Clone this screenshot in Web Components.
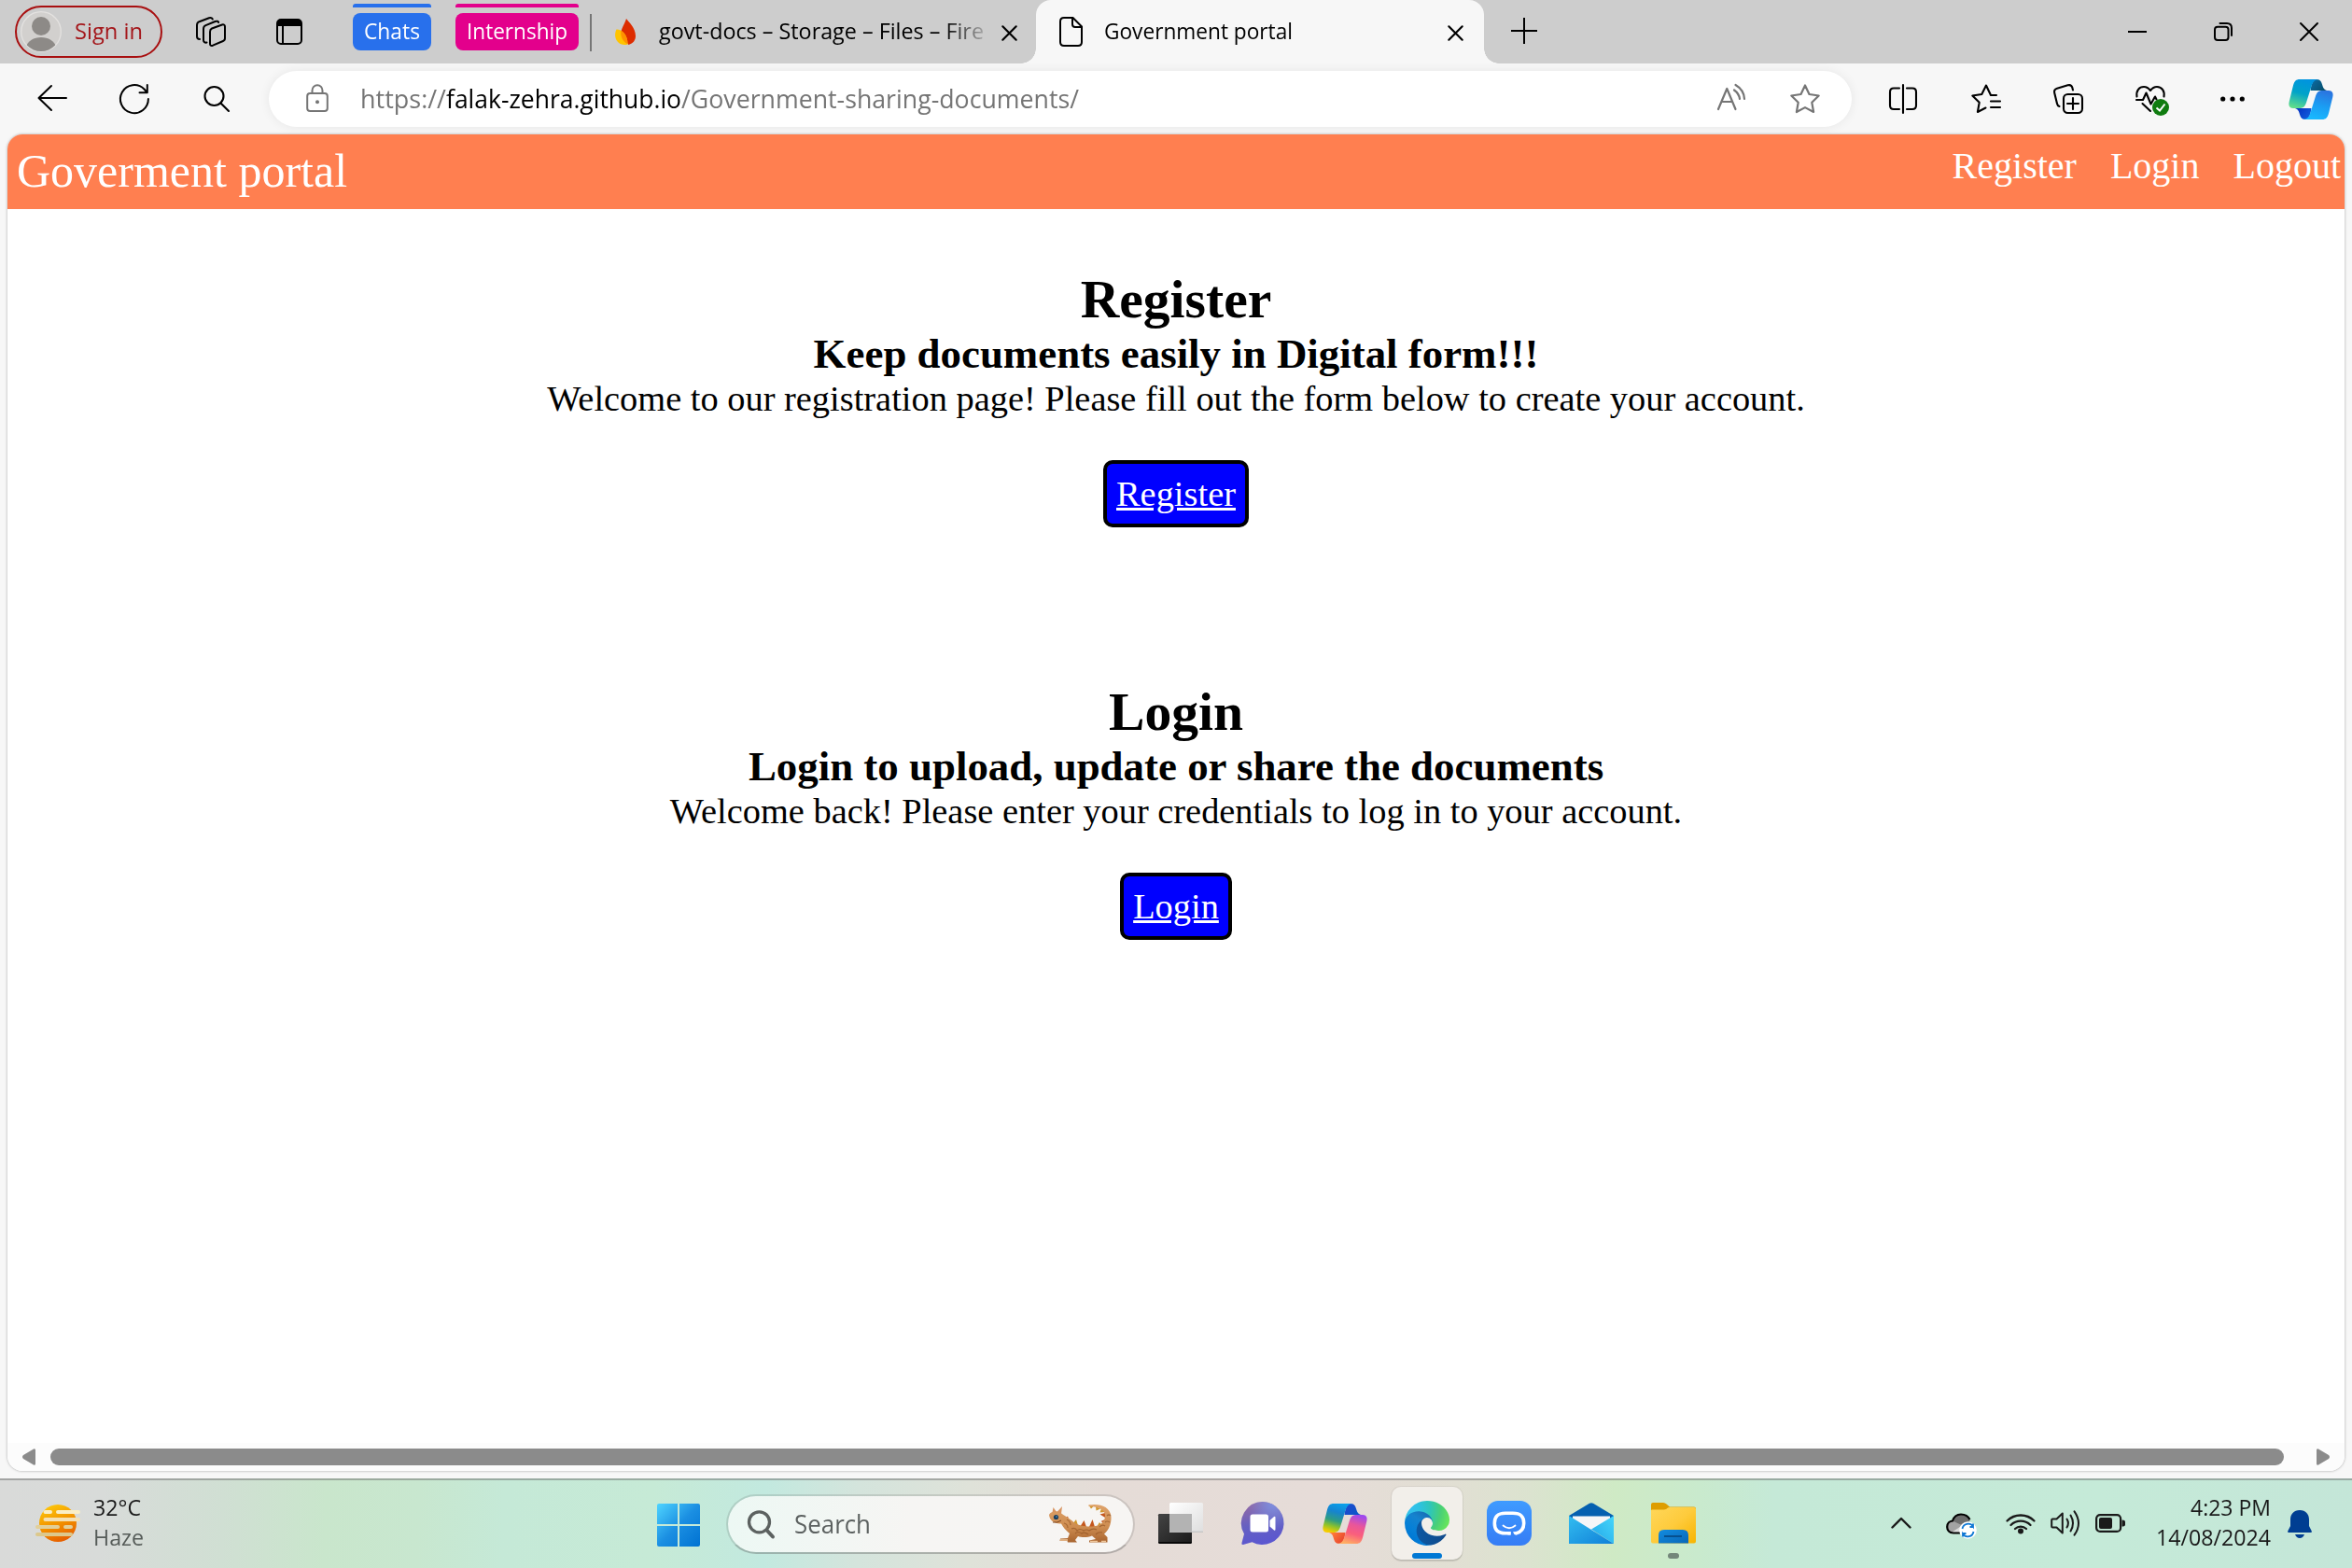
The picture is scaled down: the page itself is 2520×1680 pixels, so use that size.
<!DOCTYPE html>
<html lang="en">
<head>
<meta charset="utf-8">
<title>Government portal</title>
<style>
html,body{margin:0;padding:0}
body{width:2520px;height:1680px;overflow:hidden;background:#f7f7f7;font-family:"Open Sans","Noto Sans",sans-serif;display:flex;flex-direction:column}
</style>
</head>
<body>
<tab-strip></tab-strip>
<address-bar></address-bar>
<page-frame>
  <portal-nav brand="Goverment portal"></portal-nav>
  <portal-section heading="Register" action="Register">
    <span slot="sub">Keep documents easily in Digital form!!!</span>
    <span>Welcome to our registration page! Please fill out the form below to create your account.</span>
  </portal-section>
  <portal-section heading="Login" action="Login">
    <span slot="sub">Login to upload, update or share the documents</span>
    <span>Welcome back! Please enter your credentials to log in to your account.</span>
  </portal-section>
</page-frame>
<task-bar></task-bar>

<script>
const S = (w, d, extra = '') => `<g fill="none" stroke="currentColor" stroke-width="${w}" stroke-linecap="round" stroke-linejoin="round" ${extra}>${d}</g>`;
const ribbonL = 'M12 0H33C27 0 25.500 4 24 9L19 25C17.500 29.500 15.500 31 11 31H5C1 31-.3 28 .7 24L5 6.500C6.300 2 8 0 12 0Z';
const flapT = 'M23.500 12C24.500 5 26 0 30 0C34.500 0 35.300 3 36.500 7Q37.500 11 41 12Z';
const copilot = (id, a, b, c, d) => `<defs>
<linearGradient id="${id}a" x1=".6" y1="0" x2=".3" y2="1">${a}</linearGradient><linearGradient id="${id}b" x1="0" y1="0" x2="1" y2=".6">${b}</linearGradient>
<linearGradient id="${id}c" x1=".6" y1="0" x2=".3" y2="1">${c}</linearGradient><linearGradient id="${id}d" x1="0" y1="0" x2="1" y2=".6">${d}</linearGradient></defs>
<path d="${flapT}" fill="url(#${id}b)"/><path d="${ribbonL}" fill="url(#${id}a)"/>
<g transform="rotate(180 24 21.500)"><path d="${flapT}" fill="url(#${id}d)"/><path d="${ribbonL}" fill="url(#${id}c)"/></g>`;
const st = (...p) => p.map(([o, c]) => `<stop offset="${o}" stop-color="${c}"/>`).join('');

const ICONS = {
  avatar: [44, 44, `<defs><clipPath id="c"><circle cx="22" cy="22" r="21"/></clipPath></defs><circle cx="22" cy="22" r="21.300" fill="#d2d0ce" stroke="#e4e2e0" stroke-width="1.300"/><g clip-path="url(#c)" fill="#8d8a87"><circle cx="22" cy="16" r="10"/><path d="M5.500 39C8 31.500 14 28 22 28S36 31.500 38.500 39C34 43 28 44.500 22 44.500S10 43 5.500 39Z"/></g>`],
  workspaces: [32, 32, S(2, '<path d="M17 12.500 28 8.500C30 8 31 9 31 10.500V23C31 24.500 30.500 25.500 29 26L18 30.700C16 31.500 15 30.500 15 29V16C15 14.200 15.500 13.200 17 12.500Z"/><path d="M11.500 27.500C9.500 28 8 27 8 25V13C8 11 8.600 10 10.500 9.200L20.500 5C22.500 4.300 24 4.800 24.200 6"/><path d="M4 24C2 24 1 23 1 21V9C1 7 1.600 6 3.500 5.200L14 1.200C15.800.7 17.200 1.300 17.800 2.500"/>')],
  tabpane: [28, 28, S(2, '<rect x="1" y="1" width="26" height="26" rx="4"/><path d="M7 8V27"/>') + '<path d="M1 8V5a4 4 0 0 1 4-4h18a4 4 0 0 1 4 4v3Z" fill="#000"/>'],
  flame: [22, 28, `<path d="M12 0C14 3 22 9.500 22 18.500C22 23 19.500 26.500 14.500 28L6 17C6.500 10 10.500 5.500 12 0Z" fill="#dd2c00"/><path d="M1.500 11.500C5 11 13.500 15 13.500 27.500C9.500 29 5.500 27.500 3 25C-.5 21.500-.6 15.500 1.500 11.500Z" fill="#ffc400"/><path d="M6.300 12.800C10.500 15.500 13.500 20 13.500 27.500C7 23.500 5.800 18.500 6.300 12.800Z" fill="#ff9100"/>`],
  doc: [25, 32, S(2, '<path d="M5 1H14.500L24 10.500V27Q24 31 20 31H5Q1 31 1 27V5Q1 1 5 1Z"/><path d="M14 1.500V8Q14 11 17 11H23.500"/>')],
  close: [17, 17, S(2.200, '<path d="M1.300 1.300 15.700 15.700M15.700 1.300 1.300 15.700"/>')],
  plus: [28, 28, '<path d="M14 0V28M0 14H28" stroke="#000" stroke-width="2"/>'],
  min: [20, 20, '<path d="M0 10H20" stroke="#000" stroke-width="2"/>'],
  restore: [20, 20, S(2, '<rect x="1" y="4.800" width="14.500" height="14.200" rx="3"/><path d="M6.500 1H14Q19 1 19 6V14"/>')],
  winclose: [20, 20, S(2, '<path d="M1 1 19 19M19 1 1 19"/>')],
  back: [32, 28, S(2, '<path d="M31 14H1.500M15 1 1.500 14 15 27"/>')],
  refresh: [32, 32, S(2, '<path d="M30.900 16A15 15 0 1 1 26.500 5.500L29.500 9M29.800 1V9.300H21.500"/>')],
  find: [28, 28, S(2.100, '<circle cx="11.500" cy="11" r="10"/><path d="M18.500 18.500 27 27"/>')],
  lock: [24, 30, S(2, '<rect x="1.200" y="10" width="21.600" height="19" rx="3"/><path d="M6.500 10V7A5.500 5.800 0 0 1 17.500 7V10"/>') + '<circle cx="12" cy="19.300" r="2" fill="currentColor"/>'],
  read: [30, 29, S(2.200, '<path d="M1 27 10.300 5 19.500 27M4.500 19H16"/><path d="M18 6.500C21.500 9 23.500 12 24 16"/><path d="M19.500 1C25.500 4.500 28.700 9.500 29 16"/>')],
  star: [32, 32, S(2.200, '<path d="M16 1.500 20.500 11 30.700 12.500 23.300 19.700 25.100 30 16 25.100 6.900 30 8.700 19.700 1.300 12.500 11.500 11Z"/>')],
  split: [30, 32, S(2.100, '<path d="M11 4.500H5Q1 4.500 1 8.500V23Q1 27 5 27H11M19 4.500H25Q29 4.500 29 8.500V23Q29 27 25 27H19M15 1V31"/>')],
  favs: [32, 32, S(2.100, '<path d="M27 12H21L16 1.500 11.300 11 1.300 12.500 8.700 19.700 6.900 30 15.500 25.500M21 18.500H31M21 25H31"/>')],
  coll: [32, 32, S(2.100, '<rect x="11" y="11" width="20" height="20" rx="4.500"/><path d="M21 15V27M15 21H27"/><path d="M6.500 24C5 23.500 4.300 22.500 4 21L1.200 9.500C.6 7 1.500 5.500 4 4.700L15.500 1.300C18 .6 19.600 1.400 20.300 3.800L21 6.500"/>')],
  health: [36, 32, S(2.100, '<path d="M1.500 11.500C.5 5 4 1 9 1Q13 1 16 5Q19 1 23 1C28.500 1 31.500 6 30.500 11.500"/><path d="M1 15H8L11.500 7.500 16.500 19.500 21 11.500 22.500 14.500M7.500 19 16 27"/>') + '<circle cx="27" cy="23" r="9" fill="#107c10"/><path d="M22.500 23.500 26 26.500 31.500 19.500" fill="none" stroke="#fff" stroke-width="2"/>'],
  dots: [26, 6, '<circle cx="2.700" cy="3" r="2.600"/><circle cx="13" cy="3" r="2.600"/><circle cx="23.300" cy="3" r="2.600"/>'],
  copilotBlue: [48, 43, copilot('p', st([0, '#0093e0'], [.5, '#00a3c8'], [1, '#5fdc8c']), st([0, '#0d6ea8'], [1, '#06506e']), st([0, '#19b9ff'], [.5, '#1b9cf2'], [1, '#2b74df']), st([0, '#1265e0'], [1, '#0735c4']))],
  copilot: [48, 43, copilot('q', st([0, '#0aa0ea'], [.3, '#1684d0'], [.6, '#2f9d82'], [.8, '#8fc32a'], [1, '#f6cc00']), st([0, '#2447cf'], [1, '#0a56c9']), st([0, '#ffad62'], [.35, '#fa5f7c'], [.65, '#e9569a'], [1, '#9d49ef']), st([0, '#e23b2c'], [1, '#ff7a3a']))],
  haze: [48, 40, `<defs><linearGradient id="h" x1=".3" y1="0" x2=".7" y2="1">${st([0, '#fdc60a'], [.5, '#f29200'], [1, '#e55a00'])}</linearGradient></defs><circle cx="24" cy="20" r="20" fill="url(#h)"/><g stroke-width="4" stroke-linecap="round"><path d="M10.500 8H16M24 8H46" stroke="#faeec6"/><path d="M10.500 16H46" stroke="#f4e0b4"/><path d="M2 24H24M32 24H38" stroke="#e2cf98"/><path d="M2 32H38" stroke="#dcc88c"/></g>`],
  start: [46, 46, `<defs><linearGradient id="w" x1="0" y1="0" x2="46" y2="46" gradientUnits="userSpaceOnUse">${st([0, '#4fd4ff'], [.5, '#1b8fe2'], [1, '#0072d2'])}</linearGradient></defs><path fill="url(#w)" d="M2 0H22V22H0V2Q0 0 2 0ZM24 0H44Q46 0 46 2V22H24ZM0 24H22V46H2Q0 46 0 44ZM24 24H46V44Q46 46 44 46H24Z"/>`],
  searchBold: [29, 31, S(3.300, '<circle cx="12.500" cy="12.800" r="11"/><path d="M20.500 21.500 27 28.500" stroke-width="4"/>')],
  lizard: [68, 42, `<defs><linearGradient id="l" x1="0" y1="0" x2="0" y2="1">${st([0, '#dfa36b'], [.6, '#cd8c50'], [1, '#a8642f'])}</linearGradient></defs>
<path d="M16 16 20 12.500 22 19ZM33 24 37.500 17 40 24ZM43 24 46.500 16 49 24ZM60 9 54.500 10.500 61 14.500ZM61 15.500 55.500 18 60 20.500Z" fill="#c4571d"/><path d="M42.500 .5 45 4.500 48 1.500ZM50 2 50.500 6.500 55 4.500ZM56 4.500 54.500 8.500 60 8ZM25 21 29 16 31.500 24ZM51 24 54 19 58 24Z" fill="#cf952c"/>
<path d="M42.500 .5C54-1.500 65.500 2 66.500 13C67 22 62.500 29 59 31.500L62.500 35 62.500 40.500 43 40.500 43 38.500 50 37 46 33.500C41 35.500 35 35.500 31 34L28 38 30 40.500 20 40.500 19.500 39 11.500 39 12 36.500 20 36 22 31C18 28 15 24 13 20.500C6 21 .5 17 0 11C2 7 8 6.500 12 8.500C16 12 21 14 27 19.500C34 24 48 25 54.500 21.500C62 17 62 7 54 4C50 2.500 47 2 42.500 2Z" fill="url(#l)"/>
<path d="M3.500 8.500 4.500 3 8 8ZM8.500 8 14 2 13 10Z" fill="#d89460"/><circle cx="7.500" cy="13.500" r="2.600" fill="#193d5e"/><circle cx="8" cy="13" r=".8" fill="#62a8d8"/>
<path d="M4 19Q9 20 13 17" stroke="#7a4420" fill="none"/>
<path d="M16 20Q20 21 20 25M19 16Q23 18 23 22M24 26Q28 24 30 28Q33 25 37 28Q40 26 43 28Q47 25 51 27M28 31Q31 28 35 31Q38 29 42 32M54 24Q57 21 60 23M60 19Q62 17 65 19M62 12Q64 10 66 12M50 32Q53 29 57 30" fill="none" stroke="#8c4f20" stroke-width="1.200" opacity=".6"/><path d="M12 38H20M44 39.500H52M56 39.500H61" stroke="#f0c69a" stroke-width="1.500" fill="none"/>`],
  taskview: [48, 44, `<defs><linearGradient id="t" x1="0" y1="0" x2="1" y2="1">${st([0, '#444'], [1, '#1c1c1c'])}</linearGradient><linearGradient id="u" x1="0" y1="0" x2="1" y2="1">${st([0, '#fff'], [1, '#dedede'])}</linearGradient></defs><rect y="12" width="36" height="32" rx="1.500" fill="#080808"/><path d="M1.500 12H36V42H0V13.500Z" fill="url(#t)"/><rect x="12" width="36" height="32" rx="1.500" fill="url(#u)"/><path d="M12 12H36V32H12Z" fill="#b3b3b3"/><path d="M12 31.200H48" stroke="#bbb"/>`],
  chat: [46, 46, `<defs><linearGradient id="m" x1=".2" y1=".1" x2=".4" y2="1">${st([0, '#8d68a8'], [.5, '#6560c2'], [1, '#5b57d0'])}</linearGradient><radialGradient id="n" cx=".75" cy=".05" r=".6"><stop offset="0" stop-color="#7d8fe0"/><stop offset="1" stop-color="#7d8fe0" stop-opacity="0"/></radialGradient></defs><path d="M23 0A23 23 0 1 1 11.500 43.200L2 46Q-.2 46.300 .5 44L3 34.500A23 23 0 0 1 23 0Z" fill="url(#m)"/><path d="M23 0A23 23 0 1 1 11.500 43.200L2 46L3 34.500A23 23 0 0 1 23 0Z" fill="url(#n)"/><path d="M9.500 16Q9.500 13.500 12 13.500H26.500Q29 13.500 29 16V30Q29 32.500 26.500 32.500H12Q9.500 32.500 9.500 30ZM30.500 20 35 16Q36.500 15.200 36.500 17V29.500Q36.500 31.200 35 30.500L30.500 26.500Z" fill="#fff"/>`],
  edge: [48, 48, `<defs><linearGradient id="e1" x1="58" y1="177" x2="237" y2="177" gradientUnits="userSpaceOnUse">${st([0, '#0c59a4'], [1, '#114a8b'])}</linearGradient><linearGradient id="e2" x1="150" y1="80" x2="45" y2="225" gradientUnits="userSpaceOnUse">${st([0, '#176cb4'], [.35, '#1583cf'], [.7, '#0680d7'], [1, '#0078d4'])}</linearGradient><radialGradient id="e3" cx="30" cy="45" r="235" gradientUnits="userSpaceOnUse">${st([0, '#35c1f1'], [.25, '#2ec2df'], [.5, '#2fc6b8'], [.75, '#48cf78'], [1, '#69e65a'])}</radialGradient></defs><g transform="scale(.1875)"><path fill="url(#e1)" d="M231 190.500c-3.400 1.800-6.900 3.400-10.500 4.700a101.500 101.500 0 01-35.900 6.400c-47.300 0-88.500-32.500-88.500-74.300a31.500 31.500 0 0116.400-27.300c-42.800 1.800-53.800 46.400-53.800 72.500 0 74 68.100 81.400 82.800 81.400 7.900 0 19.800-2.300 27-4.600l1.300-.4a128.300 128.300 0 0066.600-52.800 4 4 0 00-5.400-5.600z"/><path fill="url(#e2)" d="M105.700 241.400a79.200 79.200 0 01-22.700-21.300 80.700 80.700 0 0129.500-120c3.200-1.500 8.500-4.100 15.600-4a32.400 32.400 0 0125.700 13 31.900 31.900 0 016.300 18.700c0-.2 24.500-79.600-80-79.600-43.900 0-80 41.600-80 78.200a130.200 130.200 0 0012.100 56 128 128 0 00156.400 67 75.500 75.500 0 01-62.800-8z"/><path fill="url(#e3)" d="M152.300 148.900c-.9 1-3.400 2.500-3.400 5.600 0 2.600 1.700 5.200 4.800 7.300 14.400 10 41.500 8.700 41.600 8.700a59.600 59.600 0 0030.300-8.300 61.400 61.400 0 0030.400-52.900c.3-22.400-8-37.300-11.300-43.900C223.500 23.900 177.700 0 128 0A128 128 0 000 126.200c.5-36.500 36.800-66 80-66 3.500 0 23.500.3 42 10.100 16.300 8.600 24.900 18.900 30.800 29.200 6.200 10.700 7.300 24.100 7.300 29.500s-2.700 13.300-7.800 19.900z"/></g>`],
  bubble: [48, 48, `<defs><linearGradient id="z" x1="0" y1="0" x2="0" y2="1">${st([0, '#3f9bff'], [1, '#357cf5'])}</linearGradient></defs><rect width="48" height="48" rx="12" fill="url(#z)"/><path d="M25.500 34.800H20C11 34.800 8.300 30.500 8.300 24S11 13.200 20 13.200H28C37 13.200 39.700 17.500 39.700 24C39.700 29.500 37.500 33.500 31 35" fill="none" stroke="#fff" stroke-width="3.600" stroke-linejoin="round"/><path d="M22.500 33H25.700V36.600H22.500ZM28 33.200 32 33 31.500 36.800 29.500 36Z" fill="#fff"/><path d="M17.500 26.500Q24 32 30.500 26.500" fill="none" stroke="#fff" stroke-width="1.800" stroke-linecap="round"/>`],
  mail: [48, 44, `<defs><linearGradient id="k" x1="0" y1="0" x2="1" y2="1">${st([0, '#33bdf0'], [1, '#0f7fd8'])}</linearGradient><linearGradient id="j" x1="0" y1="1" x2="1" y2="0">${st([0, '#22a5e8'], [1, '#46d6fa'])}</linearGradient></defs><path d="M0 14 22 .8Q24-.3 26 .8L48 14V20H0Z" fill="#0560b0"/><path d="M4 14.500H44V18L24 34 4 18Z" fill="#f6f6f8"/><path d="M48 14V44L24 28.500Z" fill="url(#j)"/><path d="M0 14 48 44H0Z" fill="url(#k)"/>`],
  folder: [48, 44, `<defs><linearGradient id="f" x1="0" y1="0" x2="1" y2="1">${st([0, '#ffd75a'], [.5, '#fecb3c'], [1, '#f7b400'])}</linearGradient><linearGradient id="g" x1="0" y1="0" x2="1" y2="1">${st([0, '#128ce0'], [1, '#0867b8'])}</linearGradient></defs><path d="M0 2Q0 0 2 0H13Q15 0 16.500 1.500L20 4.500H46Q48 4.500 48 6.500V12H0Z" fill="#de9d00"/><path d="M0 8.500Q0 7.500 1 7.500H14Q16 7.500 18 5.500L19 5H46Q48 5 48 7V41.500Q48 43.500 46 43.500H2Q0 43.500 0 41.500Z" fill="url(#f)"/><path d="M8 43.500V35Q8 29 14 29H34Q40 29 40 35V43.500Z" fill="url(#g)"/><path d="M14 36H33" stroke="#06508f" stroke-width="2"/>`],
  chevron: [22, 13, S(2.400, '<path d="M1.500 11.500 11 2 20.500 11.500"/>')],
  cloud: [33, 28, `<path d="M8 21.500C3.500 21.500 1.200 18.500 1.200 15C1.200 11 4 8.800 7 8.500C8.500 4 12 1.500 16 1.500C20.500 1.500 24 4 25.300 8" fill="#a3a3a3"/><path d="M9 4.500C12 1 19 0 23 4L26 8 19 14 8 9Z" fill="#6e6e6e"/><path d="M5 21.500 18 13V22H8Z" fill="#dcdcdc"/><path d="M15 21.500H8C3.500 21.500 1.200 18.500 1.200 15C1.200 11 4 8.800 7 8.500C8.500 4 12 1.500 16 1.500C20.500 1.500 24 4 25.500 7" fill="none" stroke="#000" stroke-width="2.200"/><circle cx="23.500" cy="18.500" r="9.300" fill="#fff"/><path d="M17.500 17A6.300 6.300 0 0 1 29 14.500V11.500M29 15H25.500M29.500 20A6.300 6.300 0 0 1 18 22.500V25.500M18 22H21.500" fill="none" stroke="#0f78d4" stroke-width="1.800"/>`],
  wifi: [32, 24, S(2.300, '<path d="M1.500 9.500A20.500 20.500 0 0 1 30.500 9.500"/><path d="M5.500 14A15 15 0 0 1 26.500 14"/><path d="M10 18A9 9 0 0 1 22 18"/>') + '<circle cx="16" cy="20.500" r="3" fill="currentColor"/>'],
  sound: [32, 28, S(2, '<path d="M1.200 10.500Q1.200 9.500 2.200 9.500H6.500L12.800 3.500V24.500L6.500 18.500H2.200Q1.200 18.500 1.200 17.500Z"/><path d="M17.500 9.500Q20.300 14 17.500 18.500"/><path d="M21.500 5.500Q26.500 14 21.500 22.500"/><path d="M25.500 1.300Q34.500 14 25.500 26.700"/>')],
  battery: [32, 20, S(2.200, '<rect x="1.100" y="1.100" width="26" height="17.800" rx="4"/>') + '<rect x="4" y="4" width="14" height="12" rx="2" fill="currentColor"/><path d="M28.500 6.500Q32 6.500 32 8.500V11.500Q32 13.500 28.500 13.500Z" fill="currentColor"/>'],
  bell: [26, 30, '<path d="M13 0C19.500 0 23 4.500 23 10V17L25.800 22.500Q26.500 24 24.500 24H1.500Q-.5 24 .2 22.500L3 17V10C3 4.500 6.500 0 13 0ZM8 26H18Q16.500 30 13 30T8 26Z" fill="#003e92"/>'],
};

class Base extends HTMLElement {
  constructor() { super(); this.attachShadow({ mode: 'open' }); }
  connectedCallback() { this.shadowRoot.innerHTML = this.render(); }
}

customElements.define('ui-icon', class extends Base {
  render() {
    const [w, h, d] = ICONS[this.getAttribute('name')];
    return `<style>:host{display:block;flex:none;width:${w}px;height:${h}px}svg{display:block;overflow:visible}</style><svg width="${w}" height="${h}" viewBox="0 0 ${w} ${h}">${d}</svg>`;
  }
});

/* A one-line label whose glyphs are condensed to a given width. */
customElements.define('fit-text', class extends Base {
  connectedCallback() {
    const w = +this.getAttribute('w');
    this.shadowRoot.innerHTML = `<style>:host{display:block;flex:none;width:${w}px;white-space:nowrap}span{display:inline-block;transform-origin:0 50%}</style><span><slot></slot></span>`;
    const s = this.shadowRoot.querySelector('span');
    s.style.transform = `scaleX(${w / s.getBoundingClientRect().width})`;
  }
});

customElements.define('tab-group', class extends Base {
  render() {
    return `<style>:host{display:flex;flex:none;flex-direction:column;gap:6px;height:50px;padding-bottom:10px;color:#fff}
    i{height:4px;border-radius:3px 3px 0 0;background:var(--c)}div{height:40px;border-radius:8px;background:var(--c);display:flex;justify-content:center;line-height:38px}</style><i></i><div><slot></slot></div>`;
  }
});

customElements.define('browser-tab', class extends Base {
  render() {
    return `<style>:host{display:flex;flex:none;box-sizing:border-box;align-items:center;height:68px;padding-left:25px;position:relative}
    :host([active]){background:#f7f7f7;border-radius:16px 16px 0 0}
    :host([active])::before,:host([active])::after{content:"";position:absolute;bottom:0;width:16px;height:16px}
    :host([active])::before{left:-16px;background:radial-gradient(circle at 0 0,transparent 15.500px,#f7f7f7 16px)}
    :host([active])::after{right:-16px;background:radial-gradient(circle at 100% 0,transparent 15.500px,#f7f7f7 16px)}
    .x{margin-left:auto;margin-right:22px;margin-top:2px}.t{margin-left:25px;margin-top:-2px}
    :host([active]) .t{margin-left:23px}
    :host(:not([active])) .x{margin-right:20px}
    :host(:not([active])) .t{-webkit-mask:linear-gradient(90deg,#000 305px,transparent 358px)}</style>
    <ui-icon name="${this.getAttribute('icon')}"></ui-icon><div class="t"><slot></slot></div><ui-icon class="x" name="close"></ui-icon>`;
  }
});

customElements.define('tab-strip', class extends Base {
  render() {
    return `<style>:host{display:flex;flex:none;align-items:center;height:68px;background:#cdcdcd;font-size:24px;line-height:32px;color:#000}
    .pill{box-sizing:border-box;margin-left:16px;width:158px;height:56px;border:2px solid #a80f10;border-radius:28px;display:flex;align-items:center;padding-left:4px;color:#a4161a}
    .pill fit-text{margin-left:14px;margin-top:-2px}.rule{width:2px;height:40px;margin:2px 0 0 12px;background:#767676}</style>
    <div class="pill"><ui-icon name="avatar"></ui-icon><fit-text w="73">Sign in</fit-text></div>
    <ui-icon name="workspaces" style="margin-left:36px"></ui-icon><ui-icon name="tabpane" style="margin-left:54px"></ui-icon>
    <tab-group style="--c:#2870ec;width:84px;margin-left:54px"><fit-text w="60">Chats</fit-text></tab-group>
    <tab-group style="--c:#e3008c;width:132px;margin-left:26px"><fit-text w="108">Internship</fit-text></tab-group>
    <div class="rule"></div>
    <browser-tab icon="flame" style="width:476px"><fit-text w="348">govt-docs – Storage – Files – Fire</fit-text></browser-tab>
    <browser-tab icon="doc" active style="width:480px"><fit-text w="202">Government portal</fit-text></browser-tab>
    <ui-icon name="plus" style="margin:-2px 0 0 29px"></ui-icon>
    <ui-icon name="min" style="margin-left:633px"></ui-icon><ui-icon name="restore" style="margin-left:72px"></ui-icon><ui-icon name="winclose" style="margin-left:72px"></ui-icon>`;
  }
});

customElements.define('address-bar', class extends Base {
  render() {
    return `<style>:host{display:flex;flex:none;align-items:center;height:76px;background:#f7f7f7}
    .url{box-sizing:border-box;display:flex;align-items:center;width:1696px;height:60px;margin-left:42px;padding-left:40px;border-radius:30px;background:#fff;box-shadow:0 0 12px rgba(0,0,0,.07);font-size:28px;line-height:40px;color:#757575}
    .url fit-text{margin-top:-2px}b{font-weight:400;color:#000}</style>
    <ui-icon name="back" style="margin:-2px 0 0 40px"></ui-icon><ui-icon name="refresh" style="margin-left:56px"></ui-icon><ui-icon name="find" style="margin-left:58px"></ui-icon>
    <div class="url"><ui-icon name="lock" style="margin-top:-2px"></ui-icon>
      <fit-text w="92" style="margin-left:34px">https://</fit-text><fit-text w="252"><b>falak-zehra.github.io</b></fit-text><fit-text w="426">/Government-sharing-documents/</fit-text>
      <ui-icon name="read" style="margin:-3px 0 0 684px"></ui-icon><ui-icon name="star" style="margin-left:48px"></ui-icon></div>
    <ui-icon name="split" style="margin-left:40px"></ui-icon><ui-icon name="favs" style="margin-left:58px"></ui-icon><ui-icon name="coll" style="margin-left:56px"></ui-icon>
    <ui-icon name="health" style="margin:4px 0 0 56px"></ui-icon><ui-icon name="dots" style="margin-left:55px"></ui-icon><ui-icon name="copilotBlue" style="margin-left:47px"></ui-icon>`;
  }
});

customElements.define('page-frame', class extends Base {
  render() {
    return `<style>:host{display:flex;flex:none;flex-direction:column;box-sizing:border-box;width:2504px;height:1432px;margin:0 8px 8px;border-radius:16px;overflow:hidden;background:#fff;font-family:"Liberation Serif",serif;color:#000}
    :host{box-shadow:0 0 3px rgba(0,0,0,.35)}
    .view{flex:1;display:flex;flex-direction:column}
    .bar{height:30px;box-sizing:border-box;background:#fcfcfc;display:flex;align-items:center;padding:0 16px}
    .thumb{height:18px;width:2393px;border-radius:9px;background:#8b8b8b;margin:0 35px 0 16px}svg{display:block}</style>
    <div class="view"><slot></slot></div>
    <div class="bar"><svg width="14" height="18"><path d="M14 1.500V16.500Q13.500 18.500 12 17.500L1 11Q-1 9 1 7L12 .5Q13.500-.5 14 1.500Z" fill="#8b8b8b"/></svg><div class="thumb"></div><svg width="14" height="18"><path d="M0 1.500V16.500Q.5 18.500 2 17.500L13 11Q15 9 13 7L2 .5Q.5-.5 0 1.500Z" fill="#8b8b8b"/></svg></div>`;
  }
});

customElements.define('portal-nav', class extends Base {
  render() {
    return `<style>:host{display:flex;flex:none;justify-content:space-between;height:80px;background:coral;color:#fff;padding:0 4px 0 10px}
    .brand{font-size:50px;line-height:58px;padding-top:10px}nav{display:flex;gap:36px;font-size:40px;line-height:46px;padding-top:11px}</style>
    <div class="brand">${this.getAttribute('brand')}</div><nav><a>Register</a><a>Login</a><a>Logout</a></nav>`;
  }
});

customElements.define('portal-section', class extends Base {
  render() {
    return `<style>:host{display:flex;flex:none;flex-direction:column;align-items:center;height:378px;padding-top:64px;font-size:38.400px;line-height:44px}
    h1{margin:0;font-size:57.600px;line-height:66px}h2{margin:0;font-size:44.900px;line-height:51px}p{margin:0 0 44px}
    a{display:block;padding:10px;border:4px solid #000;border-radius:10px;background:#00f;color:#fff;text-decoration:underline}</style>
    <h1>${this.getAttribute('heading')}</h1><h2><slot name="sub"></slot></h2><p><slot></slot></p><a>${this.getAttribute('action')}</a>`;
  }
});

customElements.define('task-app', class extends Base {
  render() {
    return `<style>:host{display:flex;flex:none;width:88px;height:94px;flex-direction:column;align-items:center}
    .tile{box-sizing:border-box;width:76px;height:78px;margin-top:7px;border-radius:10px;display:flex;align-items:center;justify-content:center}
    :host([active]) .tile{background:#f2efea;box-shadow:0 0 0 1px rgba(0,0,0,.05),0 2px 1px rgba(0,0,0,.12)}
    i{height:6px;border-radius:3px;margin-top:-7px;width:0}:host([active]) i{width:32px;background:#0078d4}:host([open]) i{width:12px;background:#74877a}</style>
    <div class="tile"><ui-icon name="${this.getAttribute('icon')}"></ui-icon></div><i></i>`;
  }
});

customElements.define('task-bar', class extends Base {
  render() {
    return `<style>:host{display:flex;flex:none;box-sizing:border-box;height:96px;border-top:2px solid rgba(110,110,110,.5);align-items:center;font-size:24px;line-height:32px;color:#1a1a1a;
    background:linear-gradient(92deg,#d9dad9 0,#d8dbd9 110px,#d0dfd3 240px,#c9e6cc 350px,#c8e7cf 450px,#c5e9d7 540px,#c6ead6 700px,#c2e9df 820px,#d4e4dc 920px,#dfe2d9 1040px,#e5dcd7 1180px,#e6dcd8 1420px,#e1dfd3 1560px,#dbe3cf 1640px,#cfeac5 1730px,#c9eacd 1820px,#c5e9d7 1900px,#c5ead8 2250px,#c4e6d8 2520px) border-box}
    .two{display:flex;flex-direction:column;margin-top:-5px}.dim{color:#555b58}
    .search{box-sizing:border-box;display:flex;align-items:center;width:438px;height:64px;margin-left:28px;padding-left:21px;border:2px solid rgba(90,90,90,.18);border-bottom-color:rgba(80,80,80,.35);border-radius:32px;background:linear-gradient(90deg,#edf8f4,#f6f5f3 45%,#f7f5f3) padding-box;font-size:28px;line-height:38px;color:#5c6160}</style>
    <ui-icon name="haze" style="margin:-2px 0 0 38px"></ui-icon>
    <div class="two" style="margin-left:14px;width:550px"><fit-text w="51">32°C</fit-text><fit-text w="54" class="dim">Haze</fit-text></div>
    <ui-icon name="start" style="margin:1px 0 0 54px"></ui-icon>
    <div class="search"><ui-icon name="searchBold"></ui-icon><fit-text w="82" style="margin-left:21px;margin-top:-2px">Search</fit-text><ui-icon name="lizard" style="margin-left:191px"></ui-icon></div>
    <task-app icon="taskview" style="margin-left:5px"></task-app><task-app icon="chat"></task-app><task-app icon="copilot"></task-app><task-app icon="edge" active></task-app><task-app icon="bubble"></task-app><task-app icon="mail"></task-app><task-app icon="folder" open></task-app>
    <ui-icon name="chevron" style="margin:-3px 0 0 189px"></ui-icon><ui-icon name="cloud" style="margin:4px 0 0 37px"></ui-icon><ui-icon name="wifi" style="margin:-2px 0 0 31px"></ui-icon><ui-icon name="sound" style="margin:-2px 0 0 16px"></ui-icon><ui-icon name="battery" style="margin:-2px 0 0 16px"></ui-icon>
    <div class="two" style="width:156px;align-items:flex-end"><fit-text w="86">4:23 PM</fit-text><fit-text w="123">14/08/2024</fit-text></div>
    <ui-icon name="bell" style="margin-left:18px"></ui-icon>`;
  }
});
</script>
</body>
</html>
